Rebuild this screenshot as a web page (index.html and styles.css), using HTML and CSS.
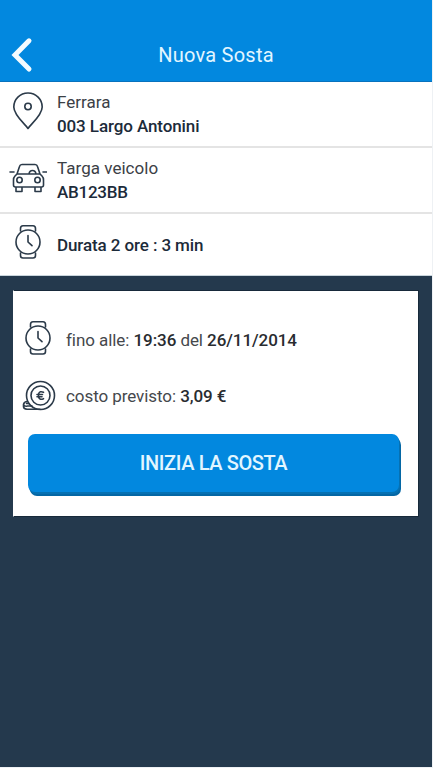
FILE: index.html
```
<!DOCTYPE html>
<html lang="it">
<head>
<meta charset="utf-8">
<title>Nuova Sosta</title>
<link rel="stylesheet" href="styles.css">
</head>
<body>
<svg class="defs" aria-hidden="true">
  <symbol id="watch" viewBox="0 0 28 36">
    <path d="M6.500 7V4.500Q6.500 1.800 9 1.800H19Q21.500 1.800 21.500 4.500V7M6.500 29V31.500Q6.500 34 9 34H19Q21.500 34 21.500 31.500V29"/>
    <circle cx="14" cy="18" r="12"/>
    <path d="M14 11.500V18L18 21.700"/>
  </symbol>
</svg>
<div class="app">
  <header class="header">
    <svg class="back" viewBox="0 0 22 36"><path d="M18 3.800L4 18L18 32"/></svg>
    <h1 class="title">Nuova Sosta</h1>
  </header>
  <main>
    <section class="row">
      <svg class="icon pin" viewBox="0 0 32 40"><path d="M16 37.500C14 34 1.800 24.500 1.800 16C1.800 8.200 8 2 16 2S30.200 8.200 30.200 16C30.200 24.500 18 34 16 37.500Z"/><circle cx="16" cy="15.500" r="3.200"/></svg>
      <div class="lines"><p class="label">Ferrara</p><p class="value place">003 Largo Antonini</p></div>
    </section>
    <section class="row">
      <svg class="icon car" viewBox="0 0 38 30"><path d="M8 11L10.500 3.500Q11 1.500 13 1.500H26Q28 1.500 28.500 3.500L31 11L33 13Q34.500 14.500 34.500 17V22Q34.500 24 32.500 24H6.500Q4.500 24 4.500 22V17Q4.500 14.500 6 13ZM8 11H31M7 24V28.500H13V24M26 24V28.500H32V24M20 11Q20.500 7.500 23.500 7.500T27 11M1 9H5M34 9H37.500"/><circle cx="10.500" cy="17" r="2.700"/><circle cx="28.500" cy="17" r="2.700"/></svg>
      <div class="lines"><p class="label">Targa veicolo</p><p class="value plate">AB123BB</p></div>
    </section>
    <section class="row duration">
      <svg class="icon watch"><use href="#watch"/></svg>
      <p class="value">Durata 2 ore : 3 min</p>
    </section>
    <section class="card">
      <div class="detail">
        <svg class="icon watch"><use href="#watch"/></svg>
        <p class="until">fino alle: <b>19:36</b> del <b>26/11/2014</b></p>
      </div>
      <div class="detail">
        <svg class="icon coin" viewBox="0 0 34 32"><circle cx="18.500" cy="15.500" r="14"/><circle cx="18.500" cy="15.500" r="9.500"/><path d="M21.500 12.300Q17.800 10.500 16.500 14V17Q17.800 20.500 21.500 18.700M15 14.500H20.500M15 16.700H20" class="euro"/><path d="M5.500 21.500Q2 21.500 1.500 24.500V26.500Q1.500 29 5 29.200H18M1.500 24.500Q2.500 26.800 5.500 26H10M4.500 23.500H7"/></svg>
        <p class="cost">costo previsto: <b>3,09 €</b></p>
      </div>
      <button class="start">INIZIA LA SOSTA</button>
    </section>
  </main>
</div>
</body>
</html>
```
FILE: styles.css
```
* { box-sizing: border-box; }
body { margin: 0; background: #eef1f4; font-family: Roboto, sans-serif; }
p, h1 { margin: 0; }
.defs { display: none; }
.app { width: 432px; height: 767px; background: #24394d; overflow: hidden; }
.header {
  height: 82px;
  padding: 29px 0 0 11px;
  display: grid;
  grid-template-columns: 22px 1fr 33px;
  align-items: center;
  background: #0288df;
  border-bottom: 1px solid #0872bd;
}
.back { width: 22px; height: 36px; fill: none; stroke: #f4fbff; stroke-width: 5; stroke-linecap: round; }
.title { text-align: center; font-size: 20px; font-weight: 400; color: #e2f6ff; line-height: 24px; letter-spacing: .25px; }
.row {
  height: 66px;
  padding-left: 8px;
  display: grid;
  grid-template-columns: 39px 1fr;
  column-gap: 10px;
  align-items: center;
  background: #fff;
  border-bottom: 2px solid #e4e4e4;
}
.row.duration { height: 62px; border-bottom: 1px solid #c9d5dc; }
.icon { justify-self: center; fill: none; stroke: #2b3a49; stroke-width: 1.6; stroke-linecap: round; stroke-linejoin: round; }
.pin { width: 32px; height: 40px; margin-bottom: 6px; }
.car { width: 38px; height: 30px; margin-bottom: 4px; }
.watch { width: 28px; height: 36px; margin-bottom: 6px; }
.coin { width: 34px; height: 32px; margin-bottom: 1px; }
.euro { stroke-width: 1.6; }
.lines { line-height: 24px; }
.label { font-size: 17px; color: #3b4046; letter-spacing: .03px; }
.value { font-size: 17px; font-weight: 500; color: #1c2b3a; letter-spacing: -.1px; }
.plate { letter-spacing: -.25px; }
.card {
  margin: 14px 13px 0;
  width: 406px;
  height: 227px;
  padding: 21px 0 0 8px;
  background: #fff;
  border: 1px solid #17293a;
  border-left-color: #fff;
}
.detail {
  height: 56px;
  display: grid;
  grid-template-columns: 34px 1fr;
  column-gap: 10px;
  align-items: center;
  font-size: 17px;
  color: #45484c;
  letter-spacing: -.07px;
}
.detail .watch { margin: 0 3px 4px 0; }
.detail b { font-weight: 500; color: #292c30; }
.start {
  display: block;
  width: 371px;
  height: 58px;
  margin: 10px 0 0 6px;
  padding: 0;
  border: 0;
  border-radius: 7px;
  background: #0288df;
  box-shadow: 1px 2px #0671b3, 2px 4px #0467a5;
  color: #e2f6ff;
  font: 500 20px/58px Roboto, sans-serif;
  letter-spacing: -.4px;
}
```
